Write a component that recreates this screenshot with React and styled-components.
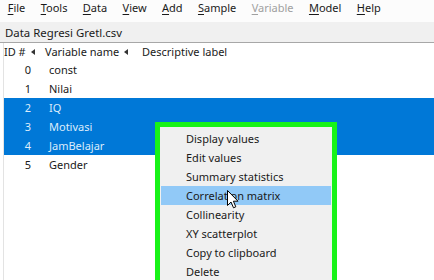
import React from "react";
import styled, { createGlobalStyle } from "styled-components";

const Global = createGlobalStyle`
  html, body { margin: 0; padding: 0; background: #ffffff; overflow: hidden; }
  body { font-family: "Noto Sans", "Open Sans", sans-serif; font-size: 11px; color: #000; }
  #root { width: 434px; height: 280px; }
`;

const Page = styled.div`
  position: relative;
  width: 434px;
  height: 280px;
  overflow: hidden;
  background: #fff;
  display: flex;
  flex-direction: column;
`;

const MenuBar = styled.div`
  height: 22px;
  box-sizing: border-box;
  display: flex;
  align-items: flex-start;
  padding-top: 0px;
  padding-left: 0px;
  background: #fcfcfc;
`;

const MenuItem = styled.div`
  padding: 0 7.7px;
  color: ${(p) => (p.$disabled ? "#a0a0a0" : "#1a1a1a")};
  line-height: 16px;
  white-space: nowrap;
  u { text-decoration: underline; text-underline-offset: 2px; }
`;

const TitleBar = styled.div`
  height: 20px;
  background: #f0f0f0;
  border-bottom: 1px solid #a7a7a7;
  display: flex;
  align-items: center;
  padding-left: 5px;
  color: #1a1a1a;
  font-size: 11.4px;
`;

const ListArea = styled.div`
  flex: 1;
  border-left: 1px solid #e3e3e3;
  margin-left: 3px;
  display: flex;
  flex-direction: column;
`;

const HeaderRow = styled.div`
  height: 17px;
  display: flex;
  align-items: center;
  color: #1a1a1a;
`;

const HeaderCell = styled.div`
  width: ${(p) => p.$w}px;
  display: flex;
  align-items: center;
  gap: 5px;
  padding-left: ${(p) => p.$pl}px;
  box-sizing: border-box;
  white-space: nowrap;
`;

const Arrow = styled.span`
  width: 0;
  height: 0;
  border-top: 3px solid transparent;
  border-bottom: 3px solid transparent;
  border-right: 4px solid #333;
`;

const Row = styled.div`
  height: 19px;
  display: flex;
  align-items: center;
  background: ${(p) => (p.$sel ? "#0078d7" : "transparent")};
  color: ${(p) => (p.$sel ? "#dcecfb" : "#1a1a1a")};
`;

const IdCell = styled.div`
  width: 41px;
  text-align: center;
  padding-left: 7px;
  box-sizing: border-box;
`;

const NameCell = styled.div`
  padding-left: 4px;
`;

const ContextMenu = styled.div`
  position: absolute;
  left: 155px;
  top: 122px;
  width: 182px;
  height: 170px;
  box-sizing: border-box;
  border: 5px solid #18f318;
  background: #f0f0f0;
  padding: 2px 1px;
  display: flex;
  flex-direction: column;
`;

const MenuEntry = styled.div`
  height: 19px;
  flex: none;
  display: flex;
  align-items: center;
  padding-left: 25px;
  color: #1a1a1a;
  background: ${(p) => (p.$hover ? "#91c9f7" : "transparent")};
  white-space: nowrap;
`;

const Cursor = styled.svg`
  position: absolute;
  left: 227px;
  top: 190px;
`;

const menus = [
  ["F", "ile"],
  ["T", "ools"],
  ["D", "ata"],
  ["V", "iew"],
  ["A", "dd"],
  ["S", "ample"],
  ["V", "ariable", true],
  ["M", "odel"],
  ["H", "elp"],
];

const vars = ["const", "Nilai", "IQ", "Motivasi", "JamBelajar", "Gender"];

const entries = [
  "Display values",
  "Edit values",
  "Summary statistics",
  "Correlation matrix",
  "Collinearity",
  "XY scatterplot",
  "Copy to clipboard",
  "Delete",
];

export default function App() {
  return (
    <Page>
      <Global />
      <MenuBar>
        {menus.map(([a, b, dis]) => (
          <MenuItem key={a + b} $disabled={dis}>
            <u>{a}</u>
            {b}
          </MenuItem>
        ))}
      </MenuBar>
      <TitleBar>Data Regresi Gretl.csv</TitleBar>
      <ListArea>
        <HeaderRow>
          <HeaderCell $w={41} $pl={0}>
            ID # <Arrow />
          </HeaderCell>
          <HeaderCell $w={95} $pl={0}>
            Variable name <Arrow />
          </HeaderCell>
          <HeaderCell $w={120} $pl={2}>
            Descriptive label
          </HeaderCell>
        </HeaderRow>
        {vars.map((v, i) => (
          <Row key={v} $sel={i >= 2 && i <= 4}>
            <IdCell>{i}</IdCell>
            <NameCell>{v}</NameCell>
          </Row>
        ))}
      </ListArea>
      <ContextMenu>
        {entries.map((e) => (
          <MenuEntry key={e} $hover={e === "Correlation matrix"}>
            {e}
          </MenuEntry>
        ))}
      </ContextMenu>
      <Cursor width="12" height="19" viewBox="0 0 12 19">
        <path
          d="M0.5 0.5 L0.5 15.5 L4 12 L6.5 17.8 L8.8 16.8 L6.4 11.2 L11 11.2 Z"
          fill="#fff"
          stroke="#000"
          strokeWidth="1"
          strokeLinejoin="miter"
        />
      </Cursor>
    </Page>
  );
}
